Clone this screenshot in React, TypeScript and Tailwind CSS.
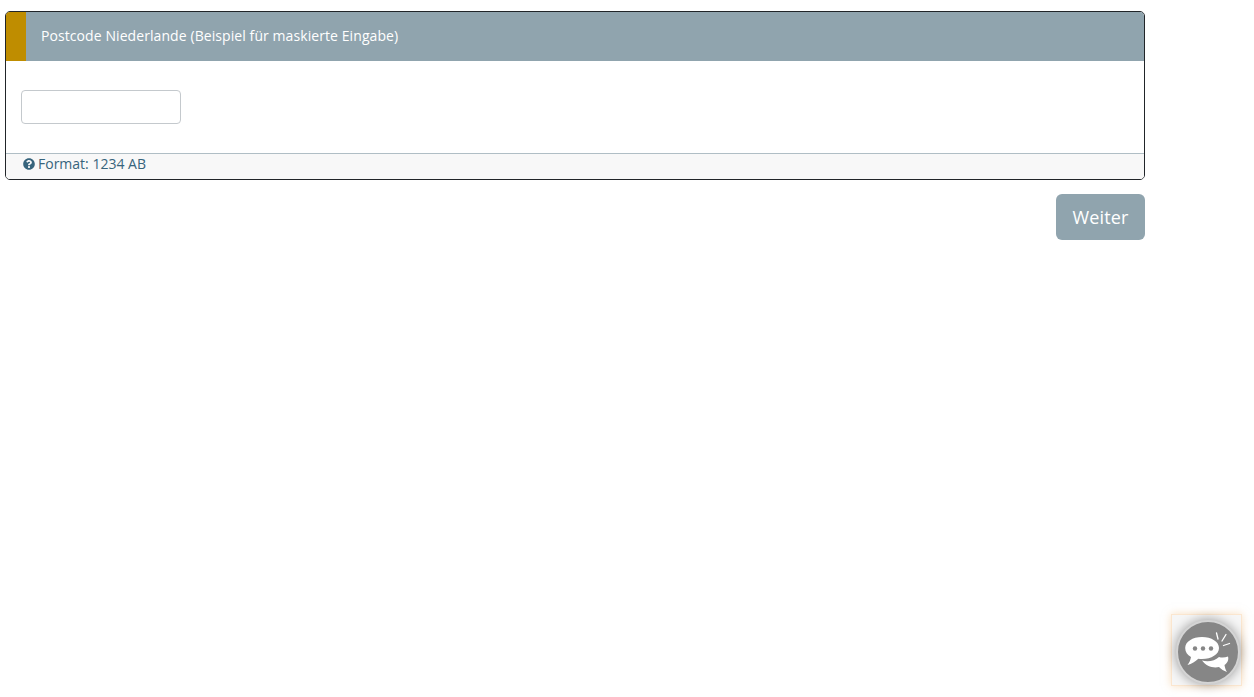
import React from "react";
import { FaQuestionCircle } from "react-icons/fa";

const ChatWidget = () => {
  return (
    <div className="fixed left-[1171px] top-[614px] w-[71px] h-[72px] border border-[#fbe6cf] bg-[#f6f6f6] shadow-[0_0_8px_rgba(240,190,130,0.5)]">
      <div className="absolute left-[4px] top-[5px] w-[64px] h-[64px] rounded-full bg-[#868686] border-[2px] border-[#d4d4d4] shadow-[0_0_12px_rgba(0,0,0,0.4)]">
        <svg viewBox="0 0 64 64" className="absolute left-[-2px] top-[-2px] w-[64px] h-[64px]">
          <path
            d="M26 40.500c6 1.500 13 .5 17-3.500 2.500.8 6 .8 9-.5 1 3-.5 6.500-3.500 8.500.3 2.500 1.200 5 2.500 7-3-1-6-3-8-5-6 1.500-13-1-17-6.500z"
            fill="#fff"
          />
          <path
            d="M26 17c9.500 0 17 4.700 17 11s-7.500 11-17 11c-1.200 0-2.500-.1-3.700-.3-3 3-6.500 5-10.800 6.300 1.700-2.200 3-4.600 3.500-8-3.700-2-5.800-5.300-5.800-9 0-6.300 7.300-11 16.800-11z"
            fill="#fff"
          />
          <circle cx="19" cy="28.500" r="2.200" fill="#868686" />
          <circle cx="27" cy="28.500" r="2.200" fill="#868686" />
          <circle cx="35" cy="28.500" r="2.200" fill="#868686" />
          <path
            d="M42 19l-1.500-6M46 21l4-6.500M47.500 25.500l6-2"
            stroke="#fff"
            strokeWidth="1.300"
            strokeLinecap="round"
            fill="none"
          />
        </svg>
      </div>
    </div>
  );
};

const App = () => {
  return (
    <div className="min-h-[697px] bg-white pt-[11px] pl-[5px] w-[1145px] font-['Open_Sans',sans-serif]">
      <div className="border border-[#212529] rounded-[5px] overflow-hidden bg-white">
        <div className="flex h-[49px] bg-[#90a4ae]">
          <div className="w-[20px] bg-[#bf8d00]" />
          <div className="flex items-start pt-[14px] pl-[15px] text-[14px] leading-[20px] tracking-[0.08px] text-white">
            Postcode Niederlande (Beispiel für maskierte Eingabe)
          </div>
        </div>
        <div className="h-[92px] px-[15px] pt-[29px]">
          <input
            type="text"
            className="block w-[160px] h-[34px] bg-white border border-[#c4c9cd] rounded-[4px]"
          />
        </div>
        <div className="flex items-start h-[26px] pl-[17px] border-t border-[#b0bec5] bg-[#f8f8f8] text-[14px] leading-[20px] text-[#37647c]">
          <FaQuestionCircle className="w-[12px] h-[12px] mr-[3px] mt-[4px]" />
          Format: 1234 AB
        </div>
      </div>
      <div className="flex justify-end mt-[14px]">
        <button className="w-[89px] h-[46px] rounded-[6px] bg-[#90a4ae] text-white text-[18px] tracking-[0.1px]">
          Weiter
        </button>
      </div>
      <ChatWidget />
    </div>
  );
};

export default App;
